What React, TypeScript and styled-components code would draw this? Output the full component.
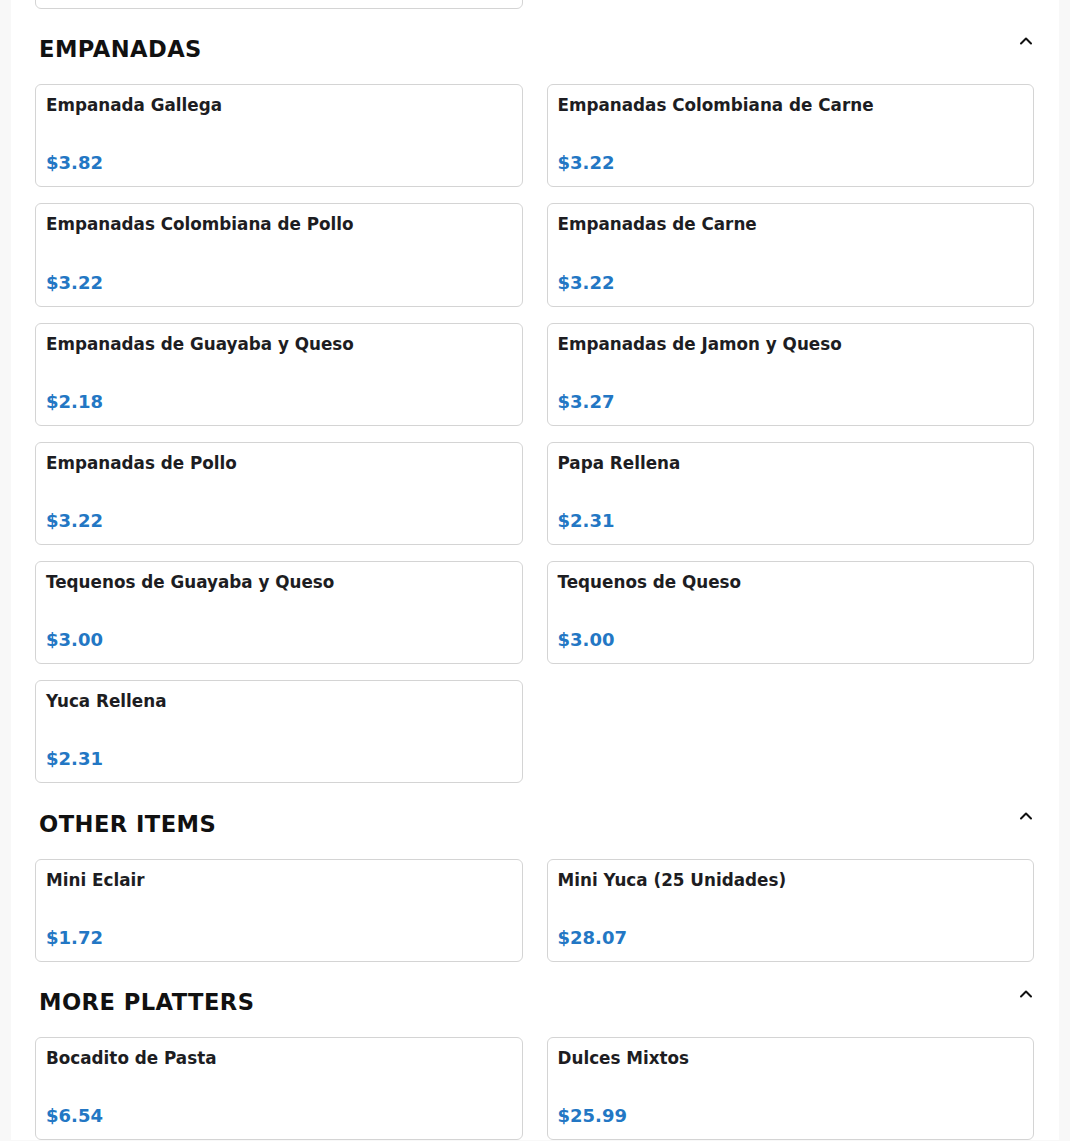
import React from "react";
import styled, { createGlobalStyle } from "styled-components";

const GlobalStyle = createGlobalStyle`
  body {
    margin: 0;
    background: #f8f8f8;
    font-family: "DejaVu Sans", "Noto Sans", sans-serif;
    color: #1c1c1c;
  }
`;

const MenuContainer = styled.main`
  width: 1048px;
  margin: 0 auto;
  background: #ffffff;
  padding: 0 25px 0 24px;
  box-sizing: border-box;
  overflow: hidden;
`;

const Section = styled.section`
  padding-top: 27.4px;
`;

const SectionHeader = styled.div`
  display: flex;
  justify-content: space-between;
  align-items: flex-start;
  padding-left: 4px;
  margin-bottom: 21px;
`;

const SectionTitle = styled.h2`
  margin: 0;
  font-size: 22.6px;
  line-height: 27px;
  font-weight: 700;
  letter-spacing: 0.45px;
  color: #111111;
`;

const ToggleButton = styled.button`
  border: 0;
  background: none;
  padding: 0;
  width: 20px;
  height: 20px;
  margin-top: -5px;
  margin-right: -2px;
  color: #111;
  cursor: pointer;
  svg {
    display: block;
  }
`;

const ItemGrid = styled.div<{ $offset?: number }>`
  display: grid;
  grid-template-columns: 1fr 1fr;
  column-gap: 24px;
  row-gap: 16px;
  margin-top: ${(p) => (p.$offset ? `-${p.$offset}px` : "0")};
`;

const ItemCard = styled.div`
  border: 1px solid #d4d4d4;
  border-radius: 6px;
  padding: 10px;
  display: flex;
  flex-direction: column;
  background: #fff;
`;

const ItemName = styled.div`
  font-size: 16.8px;
  font-weight: 700;
  line-height: normal;
  color: #1d1d22;
  margin-bottom: 34.2px;
`;

const ItemPrice = styled.div`
  font-size: 18px;
  font-weight: 700;
  line-height: 27px;
  color: #2377c4;
`;

type Item = { name: string; price: string };

const ChevronUp = () => (
  <svg width="20" height="20" viewBox="0 0 24 24" fill="none" stroke="currentColor" strokeWidth="2.4" strokeLinecap="round" strokeLinejoin="round">
    <polyline points="18 15 12 9 6 15" />
  </svg>
);

const sections: { title: string; items: Item[] }[] = [
  {
    title: "EMPANADAS",
    items: [
      { name: "Empanada Gallega", price: "$3.82" },
      { name: "Empanadas Colombiana de Carne", price: "$3.22" },
      { name: "Empanadas Colombiana de Pollo", price: "$3.22" },
      { name: "Empanadas de Carne", price: "$3.22" },
      { name: "Empanadas de Guayaba y Queso", price: "$2.18" },
      { name: "Empanadas de Jamon y Queso", price: "$3.27" },
      { name: "Empanadas de Pollo", price: "$3.22" },
      { name: "Papa Rellena", price: "$2.31" },
      { name: "Tequenos de Guayaba y Queso", price: "$3.00" },
      { name: "Tequenos de Queso", price: "$3.00" },
      { name: "Yuca Rellena", price: "$2.31" },
    ],
  },
  {
    title: "OTHER ITEMS",
    items: [
      { name: "Mini Eclair", price: "$1.72" },
      { name: "Mini Yuca (25 Unidades)", price: "$28.07" },
    ],
  },
  {
    title: "MORE PLATTERS",
    items: [
      { name: "Bocadito de Pasta", price: "$6.54" },
      { name: "Dulces Mixtos", price: "$25.99" },
    ],
  },
];

const MenuItemCard: React.FC<{ item: Item }> = ({ item }) => (
  <ItemCard>
    <ItemName>{item.name}</ItemName>
    <ItemPrice>{item.price}</ItemPrice>
  </ItemCard>
);

export default function App() {
  return (
    <>
      <GlobalStyle />
      <MenuContainer>
        {/* tail of the previous section, scrolled above the top */}
        <ItemGrid $offset={94.4}>
          <MenuItemCard item={{ name: "Bandeja de Pastelitos", price: "$24.99" }} />
        </ItemGrid>

        {sections.map((section) => (
          <Section key={section.title}>
            <SectionHeader>
              <SectionTitle>{section.title}</SectionTitle>
              <ToggleButton aria-label="Collapse section">
                <ChevronUp />
              </ToggleButton>
            </SectionHeader>
            <ItemGrid>
              {section.items.map((item) => (
                <MenuItemCard key={item.name} item={item} />
              ))}
            </ItemGrid>
          </Section>
        ))}
      </MenuContainer>
    </>
  );
}
